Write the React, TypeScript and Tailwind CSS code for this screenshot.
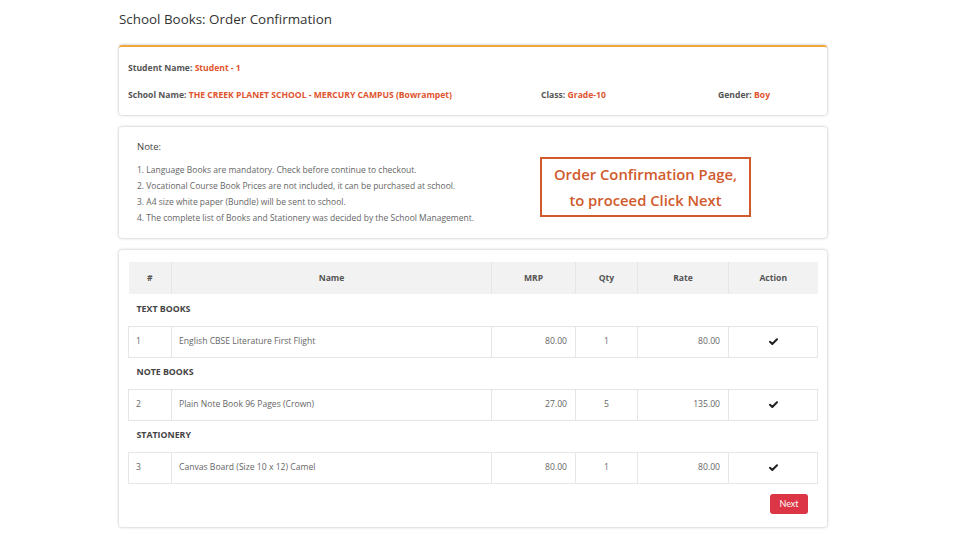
import React from "react";

const ff = { fontFamily: '"Open Sans", "Liberation Sans", sans-serif' };

type Row = { type: "group"; label: string } | { type: "item"; n: string; name: string; mrp: string; qty: string; rate: string };

const rows: Row[] = [
  { type: "group", label: "TEXT BOOKS" },
  { type: "item", n: "1", name: "English CBSE Literature First Flight", mrp: "80.00", qty: "1", rate: "80.00" },
  { type: "group", label: "NOTE BOOKS" },
  { type: "item", n: "2", name: "Plain Note Book 96 Pages (Crown)", mrp: "27.00", qty: "5", rate: "135.00" },
  { type: "group", label: "STATIONERY" },
  { type: "item", n: "3", name: "Canvas Board (Size 10 x 12) Camel", mrp: "80.00", qty: "1", rate: "80.00" },
];

function Check() {
  return (
    <svg width="9" height="7" viewBox="0 0 9 7" className="inline-block">
      <path d="M1 3.8 L3.3 6 L8 1.2" stroke="#222" strokeWidth="2" fill="none" strokeLinecap="round" strokeLinejoin="round" />
    </svg>
  );
}

export default function App() {
  return (
    <div className="w-[960px] h-[540px] bg-white overflow-hidden" style={ff}>
      <div className="pl-[119px] w-[827px]">
        <h1 className="pt-[10px] h-[45px] text-[13.4px] leading-[18px] font-medium text-[#333]">School Books: Order Confirmation</h1>

        <div className="h-[70px] rounded-[3px] border-t-2 border-t-[#f0a83c] shadow-[0_0_3px_rgba(0,0,0,0.3)] px-[9px] pt-[15px] text-[8.6px] font-bold text-[#555]">
          <div className="h-[27px] leading-[12px]">
            Student Name: <span className="text-[#e0552f]">Student - 1</span>
          </div>
          <div className="flex leading-[12px]">
            <div className="w-[413px]">
              School Name: <span className="text-[#e0552f]">THE CREEK PLANET SCHOOL - MERCURY CAMPUS (Bowrampet)</span>
            </div>
            <div className="w-[177px]">
              Class: <span className="text-[#e0552f]">Grade-10</span>
            </div>
            <div>
              Gender: <span className="text-[#e0552f]">Boy</span>
            </div>
          </div>
        </div>

        <div className="relative mt-[12px] h-[111px] rounded-[3px] shadow-[0_0_3px_rgba(0,0,0,0.3)] px-[18px] pt-[13px]">
          <div className="text-[9.5px] leading-[14px] font-medium text-[#444] mb-[8px]">Note:</div>
          <ol className="text-[8.5px] leading-[16px] text-[#666]">
            <li>1. Language Books are mandatory. Check before continue to checkout.</li>
            <li>2. Vocational Course Book Prices are not included, it can be purchased at school.</li>
            <li>3. A4 size white paper (Bundle) will be sent to school.</li>
            <li>4. The complete list of Books and Stationery was decided by the School Management.</li>
          </ol>
          <div className="absolute left-[421px] top-[30px] w-[211px] h-[60px] border-2 border-[#d05a2c] flex flex-col items-center justify-center text-[#d05a2c] text-[14.8px] leading-[26px] font-semibold">
            <div>Order Confirmation Page,</div>
            <div>to proceed Click Next</div>
          </div>
        </div>

        <div className="mt-[12px] h-[277px] rounded-[3px] shadow-[0_0_3px_rgba(0,0,0,0.3)] px-[9px] pt-[12px]">
          <table className="w-[689px] border-collapse text-[8.6px] text-[#555] table-fixed">
            <colgroup>
              <col className="w-[43px]" />
              <col className="w-[320px]" />
              <col className="w-[84px]" />
              <col className="w-[62px]" />
              <col className="w-[91px]" />
              <col className="w-[89px]" />
            </colgroup>
            <thead>
              <tr className="h-[32px] bg-[#f2f2f2] text-[#555]">
                <th className="font-bold border-r border-[#e6e6e6]">#</th>
                <th className="font-bold border-r border-[#e6e6e6]">Name</th>
                <th className="font-bold border-r border-[#e6e6e6]">MRP</th>
                <th className="font-bold border-r border-[#e6e6e6]">Qty</th>
                <th className="font-bold border-r border-[#e6e6e6]">Rate</th>
                <th className="font-bold">Action</th>
              </tr>
            </thead>
            <tbody>
              {rows.map((r, i) =>
                r.type === "group" ? (
                  <tr key={i} className="h-[32px] border-b border-[#e6e6e6]">
                    <td colSpan={6} className="px-[8px] font-bold text-[#444] text-[8.8px]">{r.label}</td>
                  </tr>
                ) : (
                  <tr key={i} className="h-[31px] border-b border-x border-[#e6e6e6] text-[#666]">
                    <td className="px-[7px] border-r border-[#e6e6e6]">{r.n}</td>
                    <td className="px-[7px] border-r border-[#e6e6e6]">{r.name}</td>
                    <td className="px-[8px] text-right border-r border-[#e6e6e6]">{r.mrp}</td>
                    <td className="text-center border-r border-[#e6e6e6]">{r.qty}</td>
                    <td className="px-[8px] text-right border-r border-[#e6e6e6]">{r.rate}</td>
                    <td className="text-center"><Check /></td>
                  </tr>
                )
              )}
            </tbody>
          </table>
          <div className="flex justify-end pr-[10px] mt-[10px]">
            <button className="w-[38px] h-[20px] rounded-[3px] bg-[#dc3545] text-white text-[9px] leading-[20px]" style={{ fontFamily: 'Lato, "Liberation Sans", sans-serif' }}>
              Next
            </button>
          </div>
        </div>
      </div>
    </div>
  );
}
